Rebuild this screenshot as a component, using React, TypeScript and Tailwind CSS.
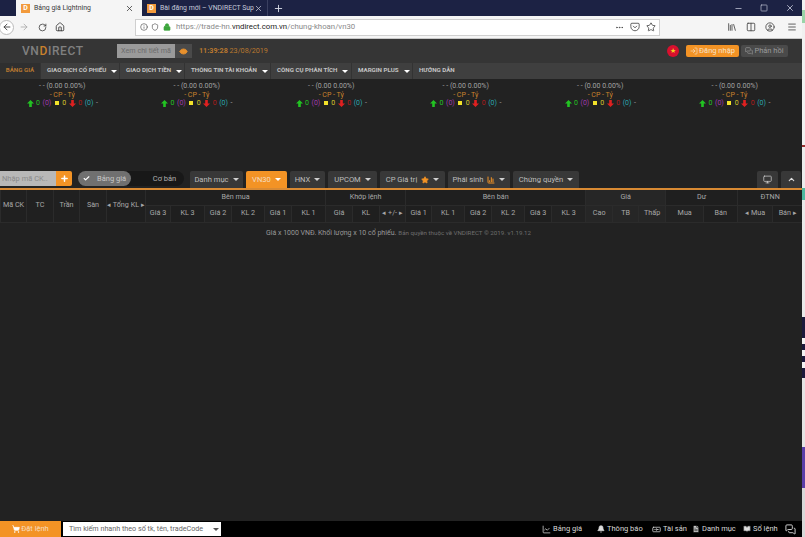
import { ArrowLeft, ArrowRight, RotateCw, Home, Info, Shield, Lock, Star, X, Plus, Minus, Square, Menu, Columns2, Library, Monitor, ChevronUp, ShoppingCart, LineChart, Bell, Banknote, FileText, BookOpen, CircleUser, Eye, LogIn, MessagesSquare, Check, Ellipsis, Pocket, BarChart3 } from "lucide-react";

const Caret = ({ className = "" }: { className?: string }) => (
  <span className={`inline-block w-0 h-0 shrink-0 border-x-[3px] border-x-transparent border-t-[3px] border-t-current ${className}`} />
);

const Favicon = () => (
  <span className="w-[9px] h-[9px] shrink-0 bg-[#f29a3c] flex items-center justify-center text-[7px] font-bold text-white leading-none">D</span>
);

const FatArrow = ({ down, color }: { down?: boolean; color: string }) => (
  <svg width="7" height="7" viewBox="0 0 8 8" fill={color} className="shrink-0">
    <polygon points={down ? "4,8 8,4 5.5,4 5.5,0 2.5,0 2.5,4 0,4" : "4,0 8,4 5.5,4 5.5,8 2.5,8 2.5,4 0,4"} />
  </svg>
);

const nav: [string, number, boolean][] = [
  ["GIAO DỊCH CỔ PHIẾU", 79, true],
  ["GIAO DỊCH TIỀN", 65, true],
  ["THÔNG TIN TÀI KHOẢN", 86, true],
  ["CÔNG CỤ PHÂN TÍCH", 81, true],
  ["MARGIN PLUS", 61, true],
  ["HƯỚNG DẪN", 49, false],
];

function Quote() {
  return (
    <div className="flex flex-col items-center text-[7px] leading-[8.5px] whitespace-nowrap">
      <div className="text-[#a3a3a3]">- - (0.00 0.00%)</div>
      <div className="text-[#c9822d]">- CP - Tỷ</div>
      <div className="flex items-center gap-[2.5px]">
        <FatArrow color="#22c322" />
        <span className="text-[#22c322]">0</span>
        <span className="text-[#a23ab0]">(0)</span>
        <span className="w-[4px] h-[4px] bg-[#f2e22a] mx-[1px]" />
        <span className="text-[#d8c92a]">0</span>
        <FatArrow down color="#e02020" />
        <span className="text-[#b01c1c]">0</span>
        <span className="text-[#2aa7b0]">(0)</span>
        <span className="text-[#a3a3a3]">-</span>
      </div>
    </div>
  );
}

const Tab = ({ label, w, extra, active }: { label: string; w: number; extra?: React.ReactNode; active?: boolean }) => (
  <div
    style={{ width: w }}
    className={`h-[17px] rounded-t-[2px] flex items-center justify-center gap-[4px] text-[7.6px] whitespace-nowrap ${active ? "bg-[#f39325] text-[#f3dcc0]" : "bg-[#383838] text-[#bdbdbd]"}`}
  >
    <span>{label}</span>
    {extra}
    <Caret className={active ? "text-white" : "text-[#d0d0d0]"} />
  </div>
);

const colWidths = [26, 27, 26, 27, 39, 25, 34, 27, 33, 27, 34, 27, 27, 26, 26, 33, 27, 33, 27, 34, 27, 26, 27, 38, 34, 35, 30];
const top: [string, number, string?][] = [
  ["Bên mua", 6],
  ["Khớp lệnh", 3],
  ["Bên bán", 6],
  ["Giá", 3, "bg-[#262626]"],
  ["Dư", 2],
  ["ĐTNN", 2],
];
const sub = ["Giá 3", "KL 3", "Giá 2", "KL 2", "Giá 1", "KL 1", "Giá", "KL", "+/-", "Giá 1", "KL 1", "Giá 2", "KL 2", "Giá 3", "KL 3", "Cao", "TB", "Thấp", "Mua", "Bán", "Mua", "Bán"];

const Footer = ({ icon, label, w }: { icon: React.ReactNode; label: string; w: number }) => (
  <div style={{ width: w }} className="flex items-center gap-[2px] text-[7.5px] text-[#d8d8d8] whitespace-nowrap">
    {icon}
    <span>{label}</span>
  </div>
);

const stripe = [
  "h-[10px] bg-[#f2f2f2]", "h-[13px] bg-[#9ad4a8]", "h-[122px] bg-[#f0f0f0]", "h-[2px] bg-[#9a3030]", "h-[41px] bg-[#ececec]", "h-[12px] bg-[#4fb8a0]",
  "h-[117px] bg-[#e9e9e9]", "h-[21px] bg-[#1c1a3c]", "h-[6px] bg-[#f2f2f2]", "h-[6px] bg-[#1c1a3c]", "h-[6px] bg-[#f2f2f2]", "h-[6px] bg-[#1c1a3c]", "h-[6px] bg-[#f2f2f2]", "h-[10px] bg-[#1c1a3c]", "h-[69px] bg-[#e4e4e4]", "h-[41px] bg-[#5a3ea8]", "h-[49px] bg-[#d8d8d8]",
];

export default function App() {
  return (
    <div className="w-[805px] h-[537px] flex overflow-hidden bg-[#222222] font-['Roboto','Liberation_Sans',sans-serif]">
      <div className="w-[802px] h-[537px] flex flex-col shrink-0 overflow-hidden">
        {/* browser tabs */}
        <div className="h-[16px] bg-[#1c2244] flex items-stretch shrink-0">
          <div className="w-[16px]" />
          <div className="w-[126px] bg-[#f5f5f5] flex items-center pl-[5px] pr-[8px] gap-[4px] text-[6.9px] text-[#3a3a3a] whitespace-nowrap">
            <Favicon />
            <span className="flex-1">Bảng giá Lightning</span>
            <X size={9} className="text-[#333]" />
          </div>
          <div className="w-[126px] flex items-center pl-[5px] pr-[4px] text-[6.9px] text-[#c4c8d8] border-r border-[#3a4060]">
            <Favicon />
            <span className="ml-[4px] flex-1 whitespace-nowrap">Bài đăng mới – VNDIRECT Sup</span>
            <X size={9} className="text-[#c4c8d8] shrink-0" />
          </div>
          <div className="w-[20px] flex items-center justify-center">
            <Plus size={11} className="text-[#d8dbe6]" />
          </div>
          <div className="flex-1" />
          <div className="flex items-center gap-[17px] pr-[7px] text-[#c4c8d8]">
            <Minus size={9} />
            <Square size={8} />
            <X size={10} />
          </div>
        </div>
        {/* browser toolbar */}
        <div className="h-[23px] bg-[#f5f5f5] flex items-center shrink-0 border-b border-[#c8c8c8]">
          <div className="w-[15px] h-[15px] -ml-[1px] rounded-full border border-[#bbb] bg-white flex items-center justify-center">
            <ArrowLeft size={10} className="text-[#333]" />
          </div>
          <ArrowRight size={10} className="text-[#aaa] ml-[5px]" />
          <RotateCw size={9} className="text-[#333] ml-[9px]" />
          <Home size={10} className="text-[#333] ml-[8px]" />
          <div className="ml-[70px] w-[525px] h-[17px] bg-white border border-[#d0d0d0] flex items-center text-[7.8px] whitespace-nowrap">
            <Info size={8} className="text-[#555] ml-[4px]" />
            <Shield size={8} className="text-[#555] ml-[3px]" />
            <Lock size={8} fill="#3ca63c" className="text-[#3ca63c] ml-[4px]" />
            <span className="ml-[5px] text-[#8a8a8a]">
              https://trade-hn.<span className="text-[#222]">vndirect.com.vn</span>/chung-khoan/vn30
            </span>
            <span className="flex-1" />
            <Ellipsis size={9} className="text-[#444]" />
            <Pocket size={10} className="text-[#444] ml-[6px]" />
            <Star size={10} className="text-[#444] ml-[6px] mr-[3px]" />
          </div>
          <div className="flex-1" />
          <div className="flex items-center gap-[9px] pr-[5px] text-[#444]">
            <Library size={10} />
            <Columns2 size={10} />
            <CircleUser size={10} />
            <Menu size={10} className="ml-[3px]" />
          </div>
        </div>
        {/* page header */}
        <div className="h-[24px] bg-[#353535] flex items-center shrink-0">
          <div className="w-[117px] pl-[22px] text-[12px] font-medium tracking-[0.6px] text-[#808080] whitespace-nowrap">
            VN<span className="text-[#c9822d]">D</span>IRECT
          </div>
          <div className="w-[58px] h-[14px] bg-[#9a9a9a] text-[7.2px] text-[#6c6c6c] flex items-center justify-center whitespace-nowrap">Xem chi tiết mã</div>
          <div className="w-[17px] h-[14px] bg-[#4a4a4a] flex items-center justify-center">
            <Eye size={9} fill="#e8912d" className="text-[#e8912d]" />
          </div>
          <div className="ml-[7px] text-[7.2px] text-[#b9782f] whitespace-nowrap">
            <span className="font-bold">11:39:28</span> 23/08/2019
          </div>
          <div className="flex-1" />
          <div className="w-[12px] h-[12px] rounded-full bg-[#d8102e] text-[#f5d020] text-[7px] leading-[12px] text-center">★</div>
          <div className="ml-[7px] w-[53px] h-[12px] rounded-[2px] bg-[#f39325] text-[#f6e2c8] text-[7.5px] flex items-center justify-center gap-[1px] whitespace-nowrap">
            <LogIn size={8} />
            Đăng nhập
          </div>
          <div className="ml-[2px] mr-[14px] w-[47px] h-[12px] rounded-[2px] bg-[#4a4a4a] text-[#9a9a9a] text-[7.5px] flex items-center justify-center gap-[1px] whitespace-nowrap">
            <MessagesSquare size={8} />
            Phản hồi
          </div>
        </div>
        {/* nav */}
        <div className="h-[16px] bg-[#3f3f3f] flex items-stretch text-[6.2px] font-bold text-[#c4c4c4] shrink-0">
          <div className="w-[40px] bg-[#2f2f2f] text-[#b9782f] flex items-center justify-center whitespace-nowrap">BẢNG GIÁ</div>
          {nav.map(([label, w, caret]) => (
            <div key={label} className="flex items-center gap-[5px] border-l border-[#333] whitespace-nowrap pl-[6px]" style={{ width: w }}>
              {label}
              {caret && <Caret className="text-white" />}
            </div>
          ))}
        </div>
        {/* quotes */}
        <div className="-ml-[5px] w-[807px] h-[90px] pt-[3px] grid grid-cols-6 items-start shrink-0">
          {[0, 1, 2, 3, 4, 5].map((i) => (
            <Quote key={i} />
          ))}
        </div>
        {/* toolbar */}
        <div className="h-[19px] flex items-end shrink-0">
          <div className="w-[56px] h-[15px] bg-[#b8b8b8] text-[#8a8a8a] text-[7.5px] flex items-center pl-[2px] mb-[2px] whitespace-nowrap">Nhập mã CK..</div>
          <div className="w-[16px] h-[15px] bg-[#f39325] text-white flex items-center justify-center rounded-r-[2px] mb-[2px]">
            <Plus size={9} strokeWidth={4} />
          </div>
          <div className="ml-[6px] w-[53px] h-[15px] rounded-full bg-[#707070] text-[#c8c8c8] text-[7.5px] flex items-center pl-[5px] gap-[7px] mb-[2px] whitespace-nowrap relative z-10">
            <Check size={7} strokeWidth={4} className="text-white" />
            Bảng giá
          </div>
          <div className="w-[61px] h-[15px] -ml-[8px] rounded-r-full bg-[#181818] text-[#b0b0b0] text-[7.5px] flex items-center justify-center pl-[22px] mb-[2px] whitespace-nowrap">Cơ bản</div>
          <div className="flex gap-[3px] ml-[6px]">
            <Tab label="Danh mục" w={53} />
            <Tab label="VN30" w={41} active />
            <Tab label="HNX" w={35} />
            <Tab label="UPCOM" w={49} />
            <Tab label="CP Giá trị" w={65} extra={<Star size={8} fill="#f39325" className="text-[#f39325]" />} />
            <Tab label="Phái sinh" w={62} extra={<BarChart3 size={8} strokeWidth={3} className="text-[#f39325]" />} />
            <Tab label="Chứng quyền" w={66} />
          </div>
          <div className="flex-1" />
          <div className="flex gap-[3px] mr-[1px]">
            <div className="w-[21px] h-[17px] bg-[#383838] flex items-center justify-center rounded-t-[2px]">
              <Monitor size={9} className="text-[#ccc]" />
            </div>
            <div className="w-[20px] h-[17px] bg-[#383838] flex items-center justify-center rounded-t-[2px]">
              <ChevronUp size={9} strokeWidth={3} className="text-[#ddd]" />
            </div>
          </div>
        </div>
        <div className="h-[2px] bg-[#d98a33] shrink-0" />
        {/* table */}
        <table className="table-fixed border-collapse text-[7.2px] text-[#a8a8a8] shrink-0 w-[802px]">
          <colgroup>
            {colWidths.map((w, i) => (
              <col key={i} style={{ width: w }} />
            ))}
          </colgroup>
          <thead>
            <tr className="h-[15px]">
              {["Mã CK", "TC", "Trần", "Sàn"].map((t) => (
                <th key={t} rowSpan={2} className="p-0 font-normal border-x border-b border-[#2b2b2b] bg-[#202020] text-center whitespace-nowrap">{t}</th>
              ))}
              <th rowSpan={2} className="p-0 font-normal border-x border-b border-[#2b2b2b] bg-[#1f1f1f] text-center whitespace-nowrap">◂ Tổng KL ▸</th>
              {top.map(([t, span, bg]) => (
                <th key={t} colSpan={span} className={`p-0 font-normal border-x border-b border-[#2b2b2b] text-center ${bg ?? "bg-[#1f1f1f]"}`}>{t}</th>
              ))}
            </tr>
            <tr className="h-[17px]">
              {sub.map((t, i) => (
                <th key={i} className={`p-0 font-normal border border-[#2b2b2b] text-center whitespace-nowrap ${i >= 15 && i < 18 ? "bg-[#262626]" : i % 2 === 0 ? "bg-[#222222]" : "bg-[#1f1f1f]"}`}>
                  {i === 8 ? "◂ +/- ▸" : i === 20 ? "◂ Mua" : i === 21 ? "Bán ▸" : t}
                </th>
              ))}
            </tr>
          </thead>
        </table>
        <div className="mt-[4px] pr-[5px] h-[14px] flex items-center justify-center text-[7px] text-[#999] shrink-0 whitespace-nowrap">
          <span>Giá x 1000 VNĐ. Khối lượng x 10 cổ phiếu.</span>
          <span className="ml-[2px] text-[6.2px] text-[#6e6e6e]">Bản quyền thuộc về VNDIRECT © 2019. v1.19.12</span>
        </div>
        <div className="flex-1" />
        {/* footer */}
        <div className="h-[16px] bg-black flex items-center shrink-0">
          <div className="w-[61px] h-[16px] bg-[#f39325] text-[#f6dcc0] text-[7.5px] flex items-center justify-center gap-[1px] whitespace-nowrap">
            <ShoppingCart size={8} fill="#fff" className="text-white" />
            Đặt lệnh
          </div>
          <div className="ml-[2px] w-[158px] h-[14px] bg-white text-[#666] text-[7.2px] flex items-center pl-[6px] pr-[2px] whitespace-nowrap">
            <span className="flex-1">Tìm kiếm nhanh theo số tk, tên, tradeCode</span>
            <Caret className="text-[#555]" />
          </div>
          <div className="flex-1" />
          <Footer w={55} icon={<LineChart size={9} />} label="Bảng giá" />
          <Footer w={55} icon={<Bell size={8} fill="#ddd" />} label="Thông báo" />
          <Footer w={40} icon={<Banknote size={9} />} label="Tài sản" />
          <Footer w={51} icon={<FileText size={8} fill="#ddd" className="text-[#111]" />} label="Danh mục" />
          <Footer w={42} icon={<BookOpen size={8} fill="#ddd" className="text-[#333]" />} label="Sổ lệnh" />
          <MessagesSquare size={11} className="text-[#ddd] mr-[6px]" />
        </div>
      </div>
      <div className="w-[3px] h-[537px] flex flex-col shrink-0">
        {stripe.map((c, i) => (
          <div key={i} className={c} />
        ))}
      </div>
    </div>
  );
}
